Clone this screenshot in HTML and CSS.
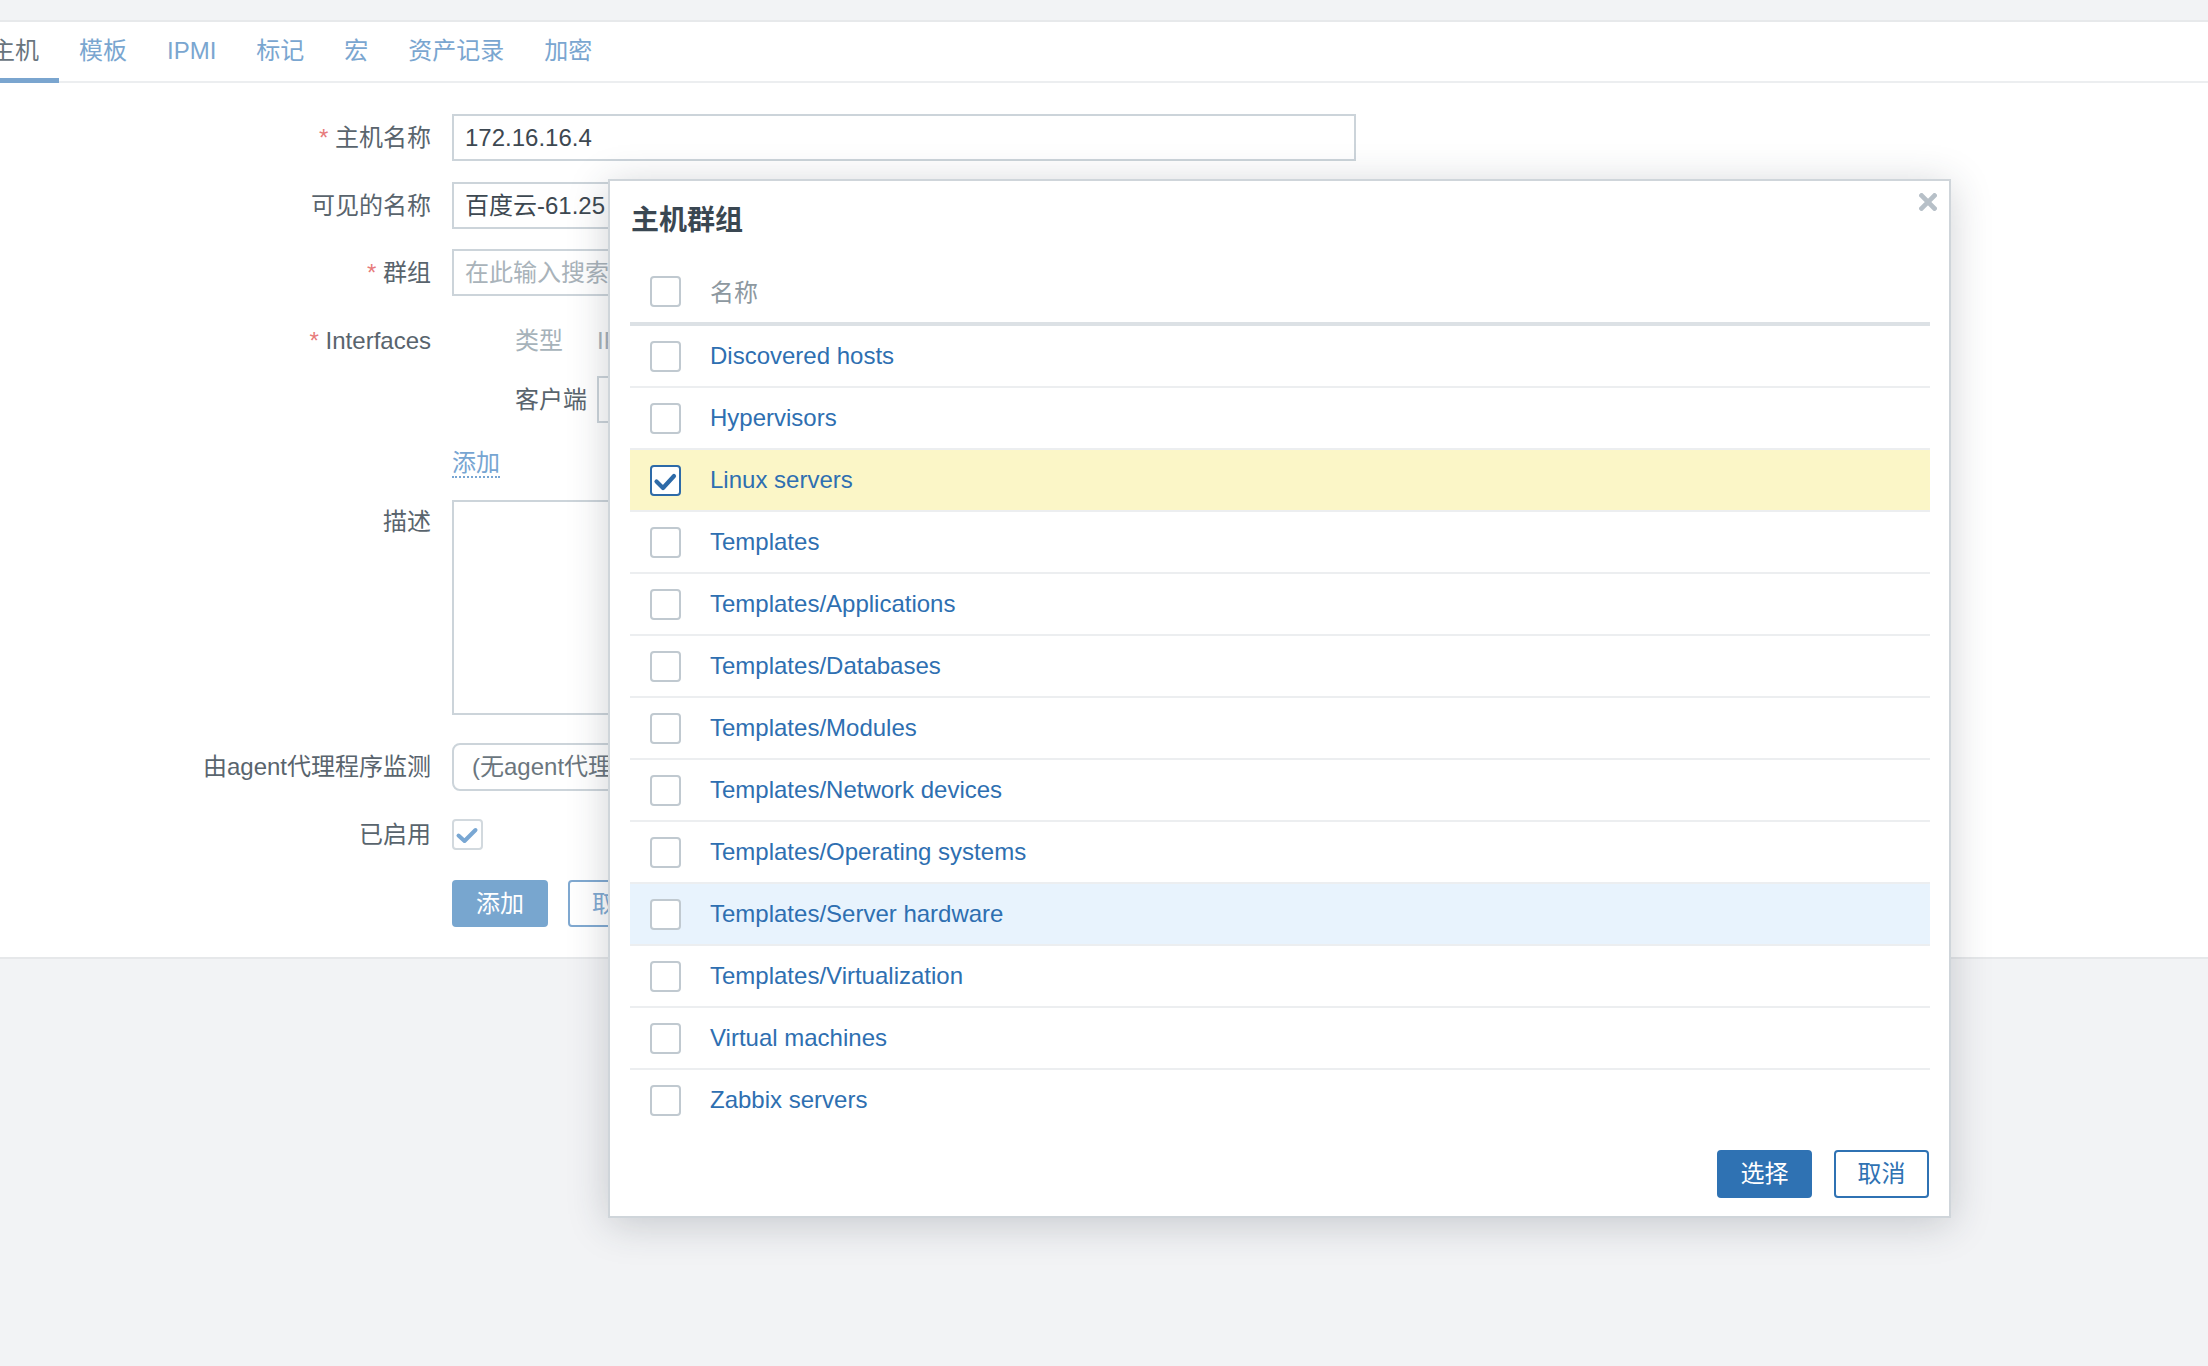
FILE: index.html
```html
<!DOCTYPE html>
<html lang="zh-CN">
<head>
<meta charset="utf-8">
<title>主机</title>
<link rel="stylesheet" href="styles.css">
</head>
<body>
<div class="topbar"></div>
<div class="page">
  <ul class="tabs">
    <li class="tab active">主机</li>
    <li class="tab">模板</li>
    <li class="tab">IPMI</li>
    <li class="tab">标记</li>
    <li class="tab">宏</li>
    <li class="tab">资产记录</li>
    <li class="tab">加密</li>
  </ul>
  <div class="form">
    <div class="row r1">
      <div class="lbl"><span class="req">*</span> 主机名称</div>
      <div class="fld"><div class="input w904 val">172.16.16.4</div></div>
    </div>
    <div class="row r2">
      <div class="lbl">可见的名称</div>
      <div class="fld"><div class="input w140 val">百度云-61.25</div></div>
    </div>
    <div class="row r3">
      <div class="lbl"><span class="req">*</span> 群组</div>
      <div class="fld"><div class="input w140 ph">在此输入搜索</div></div>
    </div>
    <div class="row rif">
      <div class="lbl top10"><span class="req">*</span> Interfaces</div>
      <div class="fld">
        <div class="if-head"><span class="if-type">类型</span><span class="if-ip">IP</span></div>
        <div class="if-row"><span class="if-type dark">客户端</span><div class="input w400"></div></div>
        <div class="if-add"><span class="dotlink">添加</span></div>
      </div>
    </div>
    <div class="row rdesc">
      <div class="lbl top8">描述</div>
      <div class="fld"><div class="textarea w904"></div></div>
    </div>
    <div class="row ragent">
      <div class="lbl">由agent代理程序监测</div>
      <div class="fld"><div class="select">(无agent代理</div></div>
    </div>
    <div class="row ren">
      <div class="lbl">已启用</div>
      <div class="fld"><span class="fcb"><svg width="27" height="27" viewBox="0 0 27 27"><path d="M4.5 14.5 L10.5 20 L21.5 9" fill="none" stroke="#79a7d3" stroke-width="4" stroke-linecap="round" stroke-linejoin="round"/></svg></span></div>
    </div>
    <div class="row rbtn">
      <div class="lbl"></div>
      <div class="fld btns"><span class="fbtn primary">添加</span><span class="fbtn outline">取消</span></div>
    </div>
  </div>
</div>

<div class="dialog">
  <svg class="close" width="18" height="18" viewBox="0 0 18 18"><path d="M2.5 2.5 L15.5 15.5 M15.5 2.5 L2.5 15.5" stroke="#b7c0c8" stroke-width="4.6" stroke-linecap="square"/></svg>
  <div class="dlg-title">主机群组</div>
  <div class="grid">
    <div class="grow head"><span class="cb"></span><span class="gname hname">名称</span></div>
    <div class="grow"><span class="cb"></span><span class="gname">Discovered hosts</span></div>
    <div class="grow"><span class="cb"></span><span class="gname">Hypervisors</span></div>
    <div class="grow sel"><span class="cb on"><svg width="27" height="27" viewBox="0 0 27 27"><path d="M4.5 14.5 L11 21 L22 9" fill="none" stroke="#2d6aa8" stroke-width="4.2" stroke-linecap="round" stroke-linejoin="round"/></svg></span><span class="gname">Linux servers</span></div>
    <div class="grow"><span class="cb"></span><span class="gname">Templates</span></div>
    <div class="grow"><span class="cb"></span><span class="gname">Templates/Applications</span></div>
    <div class="grow"><span class="cb"></span><span class="gname">Templates/Databases</span></div>
    <div class="grow"><span class="cb"></span><span class="gname">Templates/Modules</span></div>
    <div class="grow"><span class="cb"></span><span class="gname">Templates/Network devices</span></div>
    <div class="grow"><span class="cb"></span><span class="gname">Templates/Operating systems</span></div>
    <div class="grow hover"><span class="cb"></span><span class="gname">Templates/Server hardware</span></div>
    <div class="grow"><span class="cb"></span><span class="gname">Templates/Virtualization</span></div>
    <div class="grow"><span class="cb"></span><span class="gname">Virtual machines</span></div>
    <div class="grow last"><span class="cb"></span><span class="gname">Zabbix servers</span></div>
  </div>
  <div class="dlg-foot">
    <span class="dbtn primary">选择</span>
    <span class="dbtn outline">取消</span>
  </div>
</div>
</body>
</html>
```

FILE: styles.css
```css
* { box-sizing: border-box; }
html, body { margin: 0; padding: 0; }
body {
  width: 2208px;
  height: 1366px;
  background: #f2f3f5;
  font-family: "Liberation Sans", "Noto Sans CJK SC", sans-serif;
  font-size: 24px;
  color: #59646d;
  position: relative;
  overflow: hidden;
}
.topbar {
  height: 22px;
  background: #f2f3f5;
  border-bottom: 2px solid #e7e9eb;
}
.page {
  background: #fff;
  border-bottom: 2px solid #e6e8ea;
  padding-bottom: 30px;
}
.tabs {
  display: flex;
  list-style: none;
  margin: 0;
  padding: 0;
  height: 61px;
  border-bottom: 2px solid #eceef0;
}
.tab {
  margin-bottom: -2px;
  padding: 15px 20px 13px;
  line-height: 28px;
  border-bottom: 5px solid transparent;
  color: #7aa6d0;
  white-space: nowrap;
}
.tab:first-child { margin-left: -29px; }
.tab.active {
  color: #69757e;
  border-bottom-color: #7aa5cf;
}
.form { padding-top: 31px; }
.row { display: flex; align-items: center; }
.r2 { margin-top: 21px; }
.r3 { margin-top: 20px; }
.rif { margin-top: 21px; align-items: flex-start; }
.rdesc { margin-top: 23px; align-items: flex-start; }
.ragent { margin-top: 28px; }
.ren { margin-top: 28px; }
.rbtn { margin-top: 30px; }
.lbl {
  width: 431px;
  flex: none;
  text-align: right;
  line-height: 28px;
  color: #59646d;
  white-space: nowrap;
}
.lbl.top10 { padding-top: 10px; }
.lbl.top8 { padding-top: 8px; }
.req { color: #e77b7b; }
.fld { margin-left: 21px; }
.input {
  height: 47px;
  border: 2px solid #ccd4da;
  padding: 0 11px;
  line-height: 43px;
  white-space: nowrap;
  overflow: hidden;
}
.w904 { width: 904px; }
.w140 { width: 160px; }
.w400 { width: 400px; }
.val { color: #3d4851; }
.ph { color: #a9b3ba; }
.if-head {
  height: 48px;
  display: flex;
  align-items: center;
  padding-left: 63px;
  color: #a6b2ba;
  line-height: 28px;
}
.if-type { width: 82px; flex: none; }
.if-type.dark { color: #59646d; }
.if-row {
  margin-top: 11px;
  display: flex;
  align-items: center;
  padding-left: 63px;
  line-height: 28px;
}
.if-add { margin-top: 26px; height: 28px; }
.dotlink {
  display: inline-block;
  color: #77a5d2;
  line-height: 26px;
  border-bottom: 2px dotted #77a5d2;
}
.textarea {
  height: 215px;
  border: 2px solid #ccd4da;
}
.select {
  width: 400px;
  height: 48px;
  border: 2px solid #ccd4da;
  border-radius: 8px;
  padding-left: 18px;
  line-height: 44px;
  color: #6b767e;
  white-space: nowrap;
  overflow: hidden;
}
.fcb {
  display: block;
  width: 31px;
  height: 31px;
  border: 2px solid #d2d9de;
  border-radius: 4px;
  background: #fff;
}
.fcb svg { display: block; }
.btns { display: flex; gap: 20px; }
.fbtn {
  display: block;
  width: 96px;
  height: 47px;
  border-radius: 4px;
  text-align: center;
  line-height: 43px;
}
.fbtn.primary {
  background: #78a6cf;
  border: 2px solid #78a6cf;
  color: #fff;
}
.fbtn.outline {
  border: 2px solid #80a9d1;
  color: #80a9d1;
  background: #fff;
}

/* dialog */
.dialog {
  position: absolute;
  left: 608px;
  top: 179px;
  width: 1343px;
  background: #fff;
  border: 2px solid #cfd5da;
  box-shadow: 0 6px 38px rgba(40, 52, 64, 0.22);
  padding: 24px 19px 18px 20px;
}
.close {
  position: absolute;
  left: 1309px;
  top: 12px;
  display: block;
}
.dlg-title {
  font-size: 28px;
  font-weight: bold;
  line-height: 32px;
  color: #3a4752;
  margin: 0 0 23px 1px;
}
.grow {
  display: flex;
  align-items: center;
  height: 62px;
  border-bottom: 2px solid #eceef0;
}
.grow.head {
  height: 66px;
  border-bottom: 4px solid #dce1e5;
}
.grow.head .gname { padding-top: 3px; }
.grow.last { border-bottom: 0; height: 60px; }
.grow.sel { background: #fbf6c7; }
.grow.hover { background: #e8f3fd; }
.cb {
  display: block;
  flex: none;
  width: 31px;
  height: 31px;
  margin-left: 20px;
  border: 2px solid #c0c9d0;
  border-radius: 4px;
  background: #fff;
}
.cb svg { display: block; }
.cb.on { border-color: #2d6aa8; }
.gname {
  margin-left: 29px;
  color: #2e6fb1;
  line-height: 28px;
  white-space: nowrap;
}
.gname.hname { color: #8d98a0; }
.dlg-foot {
  display: flex;
  justify-content: flex-end;
  gap: 22px;
  padding-top: 20px;
  padding-right: 1px;
}
.dbtn {
  display: block;
  width: 95px;
  height: 48px;
  border-radius: 4px;
  text-align: center;
  line-height: 44px;
  font-size: 24px;
}
.dbtn.primary {
  background: #2f72b3;
  border: 2px solid #2f72b3;
  color: #fff;
}
.dbtn.outline {
  background: #fff;
  border: 2px solid #2f72b3;
  color: #2f72b3;
}
```
